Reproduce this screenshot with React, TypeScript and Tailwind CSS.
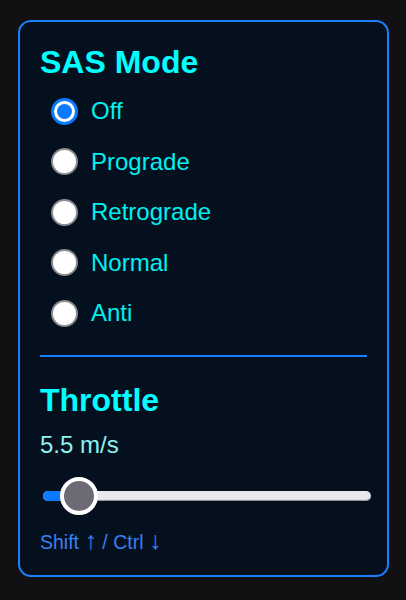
import { useState } from "react";

const modes = ["Off", "Prograde", "Retrograde", "Normal", "Anti"];

function Radio({ checked }: { checked: boolean }) {
  if (checked) {
    return (
      <span className="flex h-[27px] w-[27px] shrink-0 items-center justify-center rounded-full bg-[#0a7aff]">
        <span className="flex h-[21px] w-[21px] items-center justify-center rounded-full bg-white">
          <span className="h-[15px] w-[15px] rounded-full bg-[#0a7aff]" />
        </span>
      </span>
    );
  }
  return <span className="h-[27px] w-[27px] shrink-0 rounded-full border-2 border-[#8d8c93] bg-white" />;
}

export default function App() {
  const [mode, setMode] = useState("Off");
  const throttle = 5.5;
  const pct = throttle / 50;

  return (
    <div className="min-h-[600px] bg-[#111113] pl-[18px] pr-[17px] pt-5 font-['Liberation_Sans',Arial,sans-serif] leading-[1.15]">
      <div className="rounded-[13px] border-2 border-[#1a7fff] bg-[#05101f] px-5 pb-[22px] pt-[22px]">
        <h2 className="text-[32px] font-bold text-[#00ffff]">SAS Mode</h2>
        <div className="mt-[5px] flex flex-col">
          {modes.map((m) => (
            <label
              key={m}
              className="flex h-[50.5px] cursor-pointer items-center gap-[13px] pl-[11px]"
              onClick={() => setMode(m)}
            >
              <Radio checked={mode === m} />
              <span className="text-[24px] text-[#00f0f0]">{m}</span>
            </label>
          ))}
        </div>
        <div className="mt-[17px] h-[2px] bg-[#1a7fff]" />
        <h2 className="mt-[25px] text-[32px] font-bold text-[#00ffff]">Throttle</h2>
        <div className="mt-[12px] text-[24px] text-[#8cf2f2]">{throttle} m/s</div>
        <div className="relative mt-[18px] ml-[3px] mr-[-4px] h-[38px]">
          <div className="absolute left-0 right-0 top-[14px] h-[10px] rounded-full bg-[#e9e8ed] shadow-[inset_0_-1px_1px_#8a8990]" />
          <div
            className="absolute left-0 top-[14px] h-[10px] rounded-full bg-[#0a7aff]"
            style={{ width: `${pct * 100 + 4}%` }}
          />
          <div
            className="absolute top-0 h-[38px] w-[38px] rounded-full border-[4px] border-white bg-[#6b6a75]"
            style={{ left: 17 }}
          />
        </div>
        <div className="mt-[13px] text-[19.5px] text-[#3b7ff2]">
          Shift <span className="text-[25px] leading-none">↑</span> / Ctrl{" "}
          <span className="text-[25px] leading-none">↓</span>
        </div>
      </div>
    </div>
  );
}
